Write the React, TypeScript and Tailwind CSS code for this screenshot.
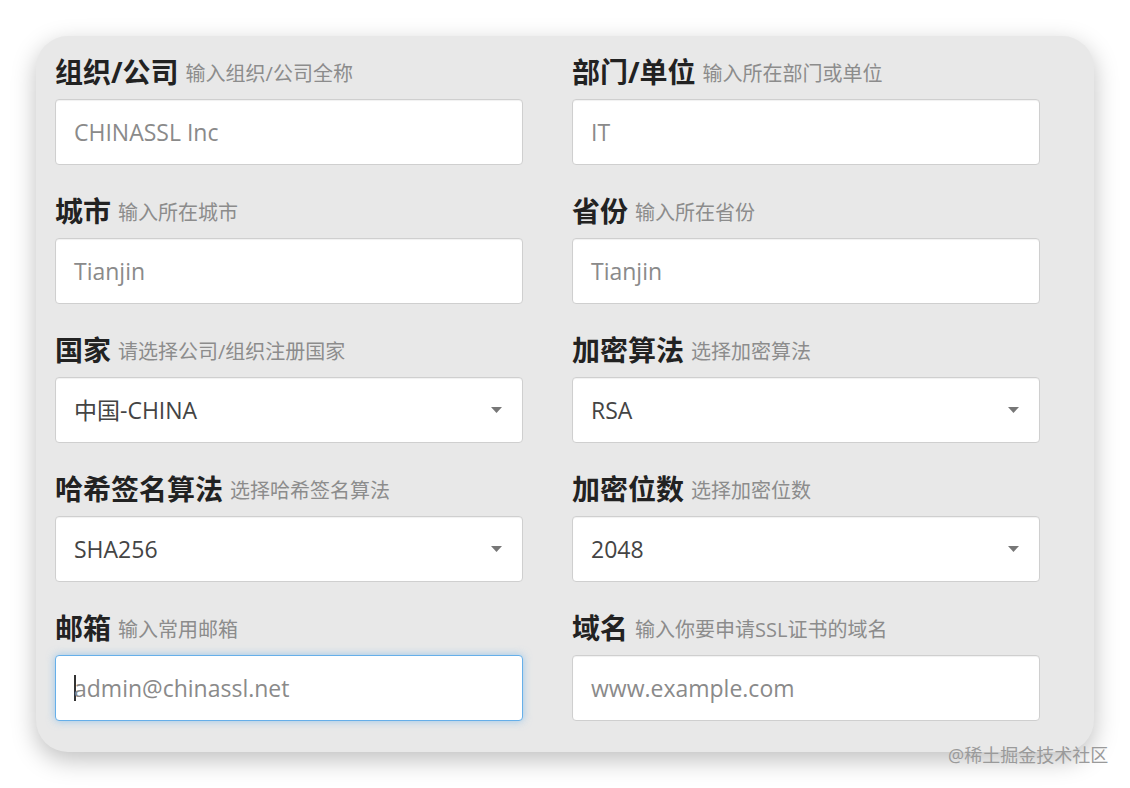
import React from "react";

interface Field {
  label: string;
  hint: string;
  value: string;
  select?: boolean;
  focused?: boolean;
}

const fields: Field[] = [
  { label: "组织/公司", hint: "输入组织/公司全称", value: "CHINASSL Inc" },
  { label: "部门/单位", hint: "输入所在部门或单位", value: "IT" },
  { label: "城市", hint: "输入所在城市", value: "Tianjin" },
  { label: "省份", hint: "输入所在省份", value: "Tianjin" },
  { label: "国家", hint: "请选择公司/组织注册国家", value: "中国-CHINA", select: true },
  { label: "加密算法", hint: "选择加密算法", value: "RSA", select: true },
  { label: "哈希签名算法", hint: "选择哈希签名算法", value: "SHA256", select: true },
  { label: "加密位数", hint: "选择加密位数", value: "2048", select: true },
  { label: "邮箱", hint: "输入常用邮箱", value: "admin@chinassl.net", focused: true },
  { label: "域名", hint: "输入你要申请SSL证书的域名", value: "www.example.com" },
];

const font = { fontFamily: '"Open Sans", "Noto Sans CJK SC", sans-serif' };

function FormField({ field }: { field: Field }) {
  return (
    <div className="flex flex-col">
      <div className="h-[44px] flex items-center gap-[7px] mb-[5px]">
        <span className="text-[28px] font-bold text-[#222] leading-none">{field.label}</span>
        <span className="text-[20px] text-[#8c8c8c] leading-none mt-[4px]">{field.hint}</span>
      </div>
      <div
        className={
          field.focused
            ? "h-[66px] w-[468px] bg-white rounded-[4px] border border-[#66afe9] shadow-[0_0_8px_rgba(102,175,233,0.6)] flex items-center px-[18px]"
            : "h-[66px] w-[468px] bg-white rounded-[4px] border border-[#cfcfcf] shadow-[inset_0_1px_1px_rgba(0,0,0,0.06)] flex items-center px-[18px]"
        }
      >
        {field.focused && <span className="w-[2px] h-[26px] bg-[#333] -mr-[2px]"></span>}
        <span
          className={
            field.select
              ? "flex-1 text-[23px] text-[#444]"
              : "flex-1 text-[23px] text-[#8a8a8a]"
          }
        >
          {field.value}
        </span>
        {field.select && (
          <svg width="11" height="6" viewBox="0 0 11 6" className="mr-[2px]">
            <path d="M0 0 L11 0 L5.5 6 Z" fill="#777" />
          </svg>
        )}
      </div>
    </div>
  );
}

export default function App() {
  return (
    <div className="relative w-[1130px] h-[788px] bg-white pl-[36px] pt-[36px]" style={font}>
      <div className="w-[1058px] h-[716px] bg-[#e8e8e8] rounded-[32px] shadow-[0_8px_24px_rgba(0,0,0,0.25)] pl-[19px] pt-[14px]">
        <div className="grid grid-cols-[468px_468px] gap-x-[49px] gap-y-[24px]">
          {fields.map((f) => (
            <FormField key={f.label} field={f} />
          ))}
        </div>
      </div>
      <div className="absolute left-[948px] top-[742px] text-[18px] text-[#9a9a9a]">@稀土掘金技术社区</div>
    </div>
  );
}
